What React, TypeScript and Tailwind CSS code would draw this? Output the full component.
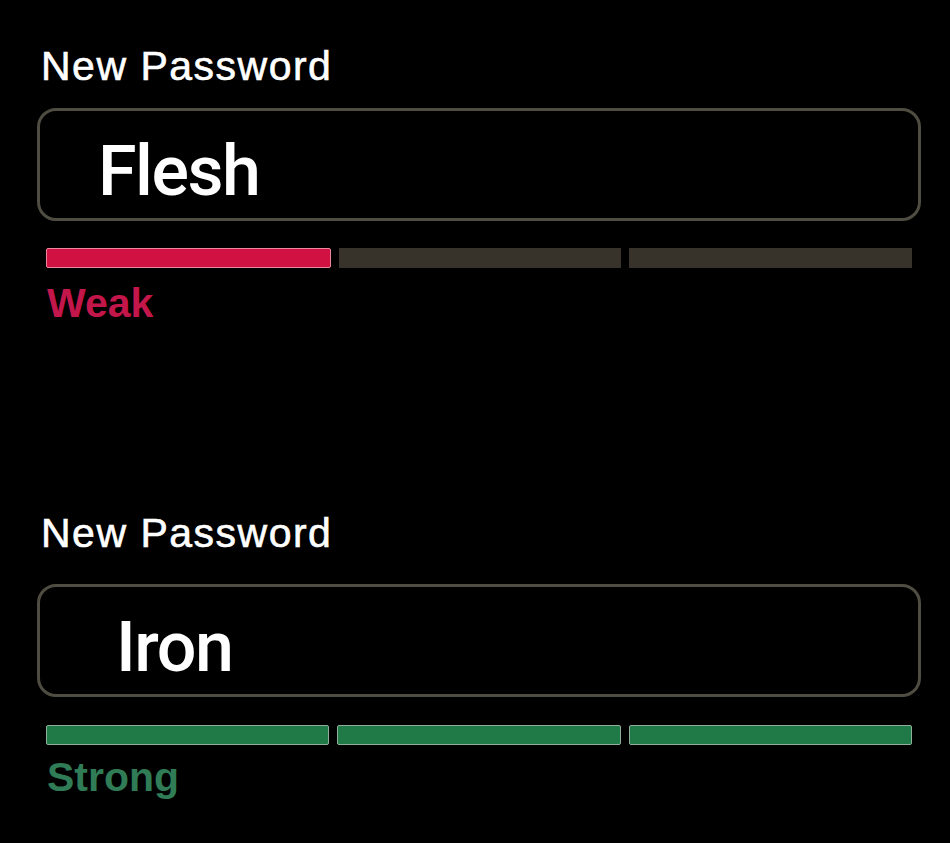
import React from 'react';

interface StrengthFieldProps {
  value: string;
  valueIndent: string;
  level: 'weak' | 'strong';
  className: string;
  inputGap: string;
  barsGap: string;
  textGap: string;
}

const bars = [0, 1, 2];

const StrengthField: React.FC<StrengthFieldProps> = ({
  value,
  valueIndent,
  level,
  className,
  inputGap,
  barsGap,
  textGap,
}) => {
  const filled = level === 'weak' ? 1 : 3;

  return (
    <div className={`flex flex-col ${className}`}>
      <label className="text-[41px] leading-none tracking-[1.5px] text-white pl-[41px] font-['Liberation_Sans',sans-serif] [-webkit-text-stroke:0.6px_white]">
        New Password
      </label>
      {/* INPUT */}
      <div
        className={`${inputGap} ml-[37px] mr-[29px] h-[113px] rounded-[19px] border-[3px] border-[#4f4d42] bg-black flex items-center`}
      >
        <span
          className={`${valueIndent} pt-[12px] text-[70px] leading-none font-medium tracking-[-1.5px] text-white font-['Roboto','Liberation_Sans',sans-serif]`}
        >
          {value}
        </span>
      </div>
      {/* STRENGTH BARS */}
      <div className={`${barsGap} ml-[46px] mr-[38px] flex gap-[8px]`}>
        {bars.map((i) =>
          i < filled ? (
            <div
              key={i}
              className={
                level === 'weak'
                  ? 'flex-1 h-[20px] rounded-[2px] bg-[#d01142] border border-[#e9889f]'
                  : 'flex-1 h-[20px] rounded-[2px] bg-[#207a47] border border-[#8fae9b]'
              }
            />
          ) : (
            <div key={i} className="flex-1 h-[20px] bg-[#37322a]" />
          ),
        )}
      </div>
      <span
        className={
          level === 'weak'
            ? `${textGap} pl-[47px] text-[41px] leading-none font-bold text-[#c3164a] font-['Liberation_Sans',sans-serif]`
            : `${textGap} pl-[47px] text-[41px] leading-none font-bold text-[#2f7c56] font-['Liberation_Sans',sans-serif]`
        }
      >
        {level === 'weak' ? 'Weak' : 'Strong'}
      </span>
    </div>
  );
};

const App: React.FC = () => {
  return (
    <div className="w-[950px] h-[843px] bg-black overflow-hidden pt-[46px] flex flex-col">
      <StrengthField
        value="Flesh"
        valueIndent="pl-[58px]"
        level="weak"
        className=""
        inputGap="mt-[21px]"
        barsGap="mt-[27px]"
        textGap="mt-[15px]"
      />
      <StrengthField
        value="Iron"
        valueIndent="pl-[76px]"
        level="strong"
        className="mt-[189px]"
        inputGap="mt-[30px]"
        barsGap="mt-[28px]"
        textGap="mt-[12px]"
      />
    </div>
  );
};

export default App;
